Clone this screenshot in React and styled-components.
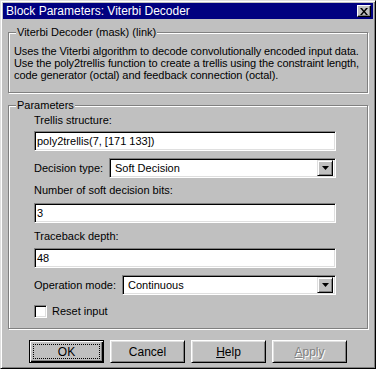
import React from 'react';
import styled, { createGlobalStyle } from 'styled-components';

const GlobalStyle = createGlobalStyle`
  html, body {
    margin: 0;
    padding: 0;
    background: #c0c0c0;
  }
  body {
    font-family: "Liberation Sans", Arial, sans-serif;
    font-size: 11px;
    color: #000;
  }
`;

const Window = styled.div`
  box-sizing: border-box;
  width: 376px;
  height: 369px;
  background: #c0c0c0;
  border: 1px solid;
  border-color: #dfdfdf #000 #000 #dfdfdf;
  box-shadow: inset 1px 1px 0 #fff, inset -1px -1px 0 #808080;
  padding: 2px;
  display: flex;
  flex-direction: column;
`;

const TitleBar = styled.div`
  height: 16px;
  background: #000080;
  color: #fff;
  display: flex;
  align-items: center;
  justify-content: space-between;
  padding: 0 2px 0 3px;
  font-size: 12px;
  line-height: 16px;
`;

const CloseButton = styled.div`
  box-sizing: border-box;
  width: 14px;
  height: 12px;
  background: #c0c0c0;
  border: 1px solid;
  border-color: #fff #000 #000 #fff;
  box-shadow: inset -1px -1px 0 #808080;
  display: flex;
  align-items: center;
  justify-content: center;
`;

const Body = styled.div`
  padding: 0 5px;
  display: flex;
  flex-direction: column;
`;

const Group = styled.fieldset`
  margin: ${p => p.$top}px 0 0 0;
  padding: 0 5px;
  border: 1px solid #808080;
  box-shadow: 1px 1px 0 #fff, inset 1px 1px 0 #fff;
  min-width: 0;
`;

const Legend = styled.legend`
  padding: 0 1px;
  margin-left: 2px;
  line-height: 13px;
  background: #c0c0c0;
  position: relative;
`;

const Description = styled.div`
  padding: 6px 0 11px;
  line-height: 12px;
  letter-spacing: -0.1px;
  white-space: nowrap;
`;

const Fields = styled.div`
  padding: 2px 26px 10px 20px;
  display: flex;
  flex-direction: column;
`;

const Label = styled.div`
  line-height: 13px;
  margin-top: ${p => p.$top || 0}px;
`;

const TextField = styled.div`
  box-sizing: border-box;
  height: 20px;
  margin-top: ${p => p.$top || 0}px;
  background: #fff;
  border: 1px solid;
  border-color: #808080 #fff #fff #808080;
  box-shadow: inset 1px 1px 0 #000, inset -1px -1px 0 #dfdfdf;
  padding: 0 2px;
  display: flex;
  align-items: center;
`;

const SelectRow = styled.div`
  display: flex;
  align-items: center;
  margin-top: ${p => p.$top || 0}px;
`;

const RowLabel = styled.div`
  width: ${p => p.$w}px;
  flex: none;
`;

const Select = styled.div`
  box-sizing: border-box;
  flex: 1;
  height: 20px;
  background: #fff;
  border: 1px solid;
  border-color: #808080 #fff #fff #808080;
  box-shadow: inset 1px 1px 0 #000, inset -1px -1px 0 #dfdfdf;
  padding: 2px 2px 2px 5px;
  display: flex;
  align-items: center;
  justify-content: space-between;
`;

const DropButton = styled.div`
  box-sizing: border-box;
  width: 16px;
  height: 16px;
  background: #c0c0c0;
  border: 1px solid;
  border-color: #dfdfdf #000 #000 #dfdfdf;
  box-shadow: inset 1px 1px 0 #fff, inset -1px -1px 0 #808080;
  display: flex;
  align-items: center;
  justify-content: center;
`;

const CheckRow = styled.label`
  display: flex;
  align-items: center;
  gap: 5px;
  margin-top: ${p => p.$top || 0}px;
  line-height: 13px;
`;

const CheckBox = styled.span`
  box-sizing: border-box;
  width: 13px;
  height: 13px;
  background: #fff;
  border: 1px solid;
  border-color: #808080 #fff #fff #808080;
  box-shadow: inset 1px 1px 0 #000, inset -1px -1px 0 #dfdfdf;
`;

const ButtonBar = styled.div`
  display: flex;
  justify-content: center;
  gap: 6px;
  margin-top: 11px;
`;

const Button = styled.div`
  box-sizing: border-box;
  width: 75px;
  height: 23px;
  background: #c0c0c0;
  border: 1px solid;
  border-color: ${p => (p.$default ? '#000' : '#fff #000 #000 #fff')};
  box-shadow: ${p =>
    p.$default
      ? 'inset 1px 1px 0 #fff, inset -1px -1px 0 #000, inset -2px -2px 0 #808080'
      : 'inset 1px 1px 0 #dfdfdf, inset -1px -1px 0 #808080'};
  display: flex;
  align-items: center;
  justify-content: center;
  padding: 3px;
  color: ${p => (p.$disabled ? '#808080' : '#000')};
  text-shadow: ${p => (p.$disabled ? '1px 1px 0 #fff' : 'none')};
  font-size: 12px;
`;

const Focus = styled.div`
  flex: 1;
  align-self: stretch;
  border: 1px dotted #000;
  display: flex;
  align-items: center;
  justify-content: center;
`;

const Underline = styled.span`
  text-decoration: underline;
`;

function Arrow() {
  return (
    <svg width="7" height="4" viewBox="0 0 7 4">
      <path d="M0 0h7L3.5 4z" fill="#000" />
    </svg>
  );
}

function CloseGlyph() {
  return (
    <svg width="8" height="7" viewBox="0 0 8 7">
      <path d="M0 0h2l2 2.5L6 0h2L5 3.5 8 7H6L4 4.5 2 7H0l3-3.5z" fill="#000" />
    </svg>
  );
}

export default function App() {
  return (
    <>
      <GlobalStyle />
      <Window>
        <TitleBar>
          <span>Block Parameters: Viterbi Decoder</span>
          <CloseButton><CloseGlyph /></CloseButton>
        </TitleBar>
        <Body>
          <Group $top={7}>
            <Legend>Viterbi Decoder (mask) (link)</Legend>
            <Description>
              Uses the Viterbi algorithm to decode convolutionally encoded input data.
              <br />
              Use the poly2trellis function to create a trellis using the constraint length,
              <br />
              code generator (octal) and feedback connection (octal).
            </Description>
          </Group>
          <Group $top={6}>
            <Legend>Parameters</Legend>
            <Fields>
              <Label>Trellis structure:</Label>
              <TextField $top={4}>poly2trellis(7, [171 133])</TextField>
              <SelectRow $top={7}>
                <RowLabel $w={75}>Decision type:</RowLabel>
                <Select>Soft Decision<DropButton><Arrow /></DropButton></Select>
              </SelectRow>
              <Label $top={6}>Number of soft decision bits:</Label>
              <TextField $top={6}>3</TextField>
              <Label $top={7}>Traceback depth:</Label>
              <TextField $top={5}>48</TextField>
              <SelectRow $top={7}>
                <RowLabel $w={88}>Operation mode:</RowLabel>
                <Select>Continuous<DropButton><Arrow /></DropButton></Select>
              </SelectRow>
              <CheckRow $top={10}>
                <CheckBox />
                Reset input
              </CheckRow>
            </Fields>
          </Group>
          <ButtonBar>
            <Button $default><Focus>OK</Focus></Button>
            <Button>Cancel</Button>
            <Button><span><Underline>H</Underline>elp</span></Button>
            <Button $disabled><span><Underline>A</Underline>pply</span></Button>
          </ButtonBar>
        </Body>
      </Window>
    </>
  );
}
